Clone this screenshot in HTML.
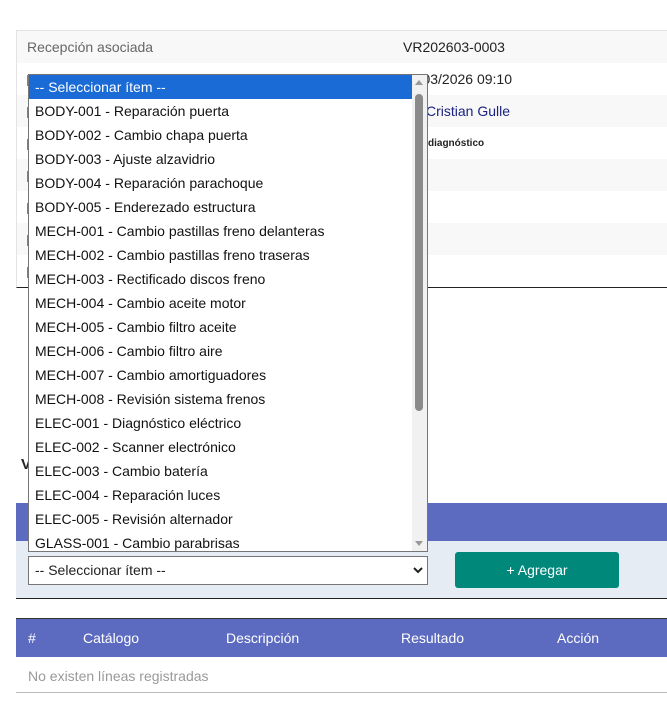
<!DOCTYPE html>
<html><head><meta charset="utf-8"><style>
*{box-sizing:border-box;margin:0;padding:0}
body{width:667px;height:701px;background:#fff;font-family:"Liberation Sans",Arial,sans-serif;font-size:14px;color:#222;position:relative;overflow:hidden}
.card{position:absolute;left:16px;top:30px;width:660px;height:258px;border:1px solid #e3e3e3;border-bottom:1px solid #222;border-right:none}
.row{position:absolute;left:0;width:100%;height:32px}
.row.g{background:#f8f8f8}
.lbl{position:absolute;left:10px;top:8px;color:#666}
.val{position:absolute;left:386px;top:8px;color:#222}
.mark{position:absolute;left:10px;top:12px;width:2px;height:11px;background:#a0785a}
.dd{position:absolute;left:28px;top:74px;width:400px;height:478px;border:1px solid #767676;background:#fff;overflow:hidden;z-index:5}
.dd div.o{height:24px;line-height:24px;padding-left:6px;color:#111;white-space:nowrap}
.dd div.o.sel{background:#1a6bd6;color:#fff;margin-right:15px}
.sb{position:absolute;right:0;top:0;width:15px;height:100%;background:#f1f1f1}
.thumb{position:absolute;left:3px;top:19px;width:8px;height:317px;background:#8a8a8a;border-radius:4px}
.arr{position:absolute;left:3px;width:0;height:0;border-left:4px solid transparent;border-right:4px solid transparent}
.band{position:absolute;left:16px;top:503px;width:660px;height:38px;background:#5c6bc0}
.form{position:absolute;left:16px;top:541px;width:660px;height:58px;background:#e6ecf3;border-bottom:1px solid #222}
.select{position:absolute;left:28px;top:556px;width:400px;height:29px;border:1px solid #767676;background:#fff;padding:5px 6px;color:#222}
.btn{position:absolute;left:455px;top:552px;width:164px;height:36px;background:#00897b;border-radius:3px;color:#fff;text-align:center;line-height:36px}
.th{position:absolute;left:16px;top:618px;width:660px;height:39px;background:#5c6bc0;border-top:1px solid #333;color:#fff}
.th span{position:absolute;top:11px}
.empty{position:absolute;left:28px;top:668px;color:#999}
.line{position:absolute;left:16px;top:692px;width:660px;height:1px;background:#bbb}
</style></head><body>
<div class="card">
 <div class="row g" style="top:0"><span class="lbl">Recepción asociada</span><span class="val">VR202603-0003</span></div>
 <div class="row" style="top:32px"><span class="mark"></span><span class="val">10/03/2026 09:10</span></div>
 <div class="row g" style="top:64px"><span class="mark"></span><span class="val" style="color:#1a237e;left:409px">Cristian Gulle</span></div>
 <div class="row" style="top:96px"><span class="mark"></span><span class="val" style="font-size:10px;top:11px;left:411px;font-weight:600">diagnóstico</span></div>
 <div class="row g" style="top:128px"><span class="mark"></span></div>
 <div class="row" style="top:160px"><span class="mark"></span></div>
 <div class="row g" style="top:192px"><span class="mark"></span></div>
 <div class="row" style="top:224px"><span class="mark"></span></div>
</div>
<div style="position:absolute;left:21px;top:456px;font-weight:bold;font-size:15px">V</div>
<div class="dd">
 <div class="o sel">-- Seleccionar ítem --</div>
 <div class="o">BODY-001 - Reparación puerta</div>
 <div class="o">BODY-002 - Cambio chapa puerta</div>
 <div class="o">BODY-003 - Ajuste alzavidrio</div>
 <div class="o">BODY-004 - Reparación parachoque</div>
 <div class="o">BODY-005 - Enderezado estructura</div>
 <div class="o">MECH-001 - Cambio pastillas freno delanteras</div>
 <div class="o">MECH-002 - Cambio pastillas freno traseras</div>
 <div class="o">MECH-003 - Rectificado discos freno</div>
 <div class="o">MECH-004 - Cambio aceite motor</div>
 <div class="o">MECH-005 - Cambio filtro aceite</div>
 <div class="o">MECH-006 - Cambio filtro aire</div>
 <div class="o">MECH-007 - Cambio amortiguadores</div>
 <div class="o">MECH-008 - Revisión sistema frenos</div>
 <div class="o">ELEC-001 - Diagnóstico eléctrico</div>
 <div class="o">ELEC-002 - Scanner electrónico</div>
 <div class="o">ELEC-003 - Cambio batería</div>
 <div class="o">ELEC-004 - Reparación luces</div>
 <div class="o">ELEC-005 - Revisión alternador</div>
 <div class="o">GLASS-001 - Cambio parabrisas</div>
 <div class="sb"><div class="arr" style="top:5px;border-bottom:5px solid #999"></div><div class="thumb"></div><div class="arr" style="bottom:5px;border-top:5px solid #999"></div></div>
</div>
<div class="band"></div>
<div class="form"></div>
<div class="select">-- Seleccionar ítem --<svg style="position:absolute;right:4px;top:9px" width="10" height="8" viewBox="0 0 10 8"><path d="M1 2l4 4 4-4" stroke="#222" stroke-width="2" fill="none"/></svg></div>
<div class="btn">+ Agregar</div>
<div class="th"><span style="left:12px">#</span><span style="left:67px">Catálogo</span><span style="left:210px">Descripción</span><span style="left:385px">Resultado</span><span style="left:541px">Acción</span></div>
<div class="empty">No existen líneas registradas</div>
<div class="line"></div>
</body></html>
